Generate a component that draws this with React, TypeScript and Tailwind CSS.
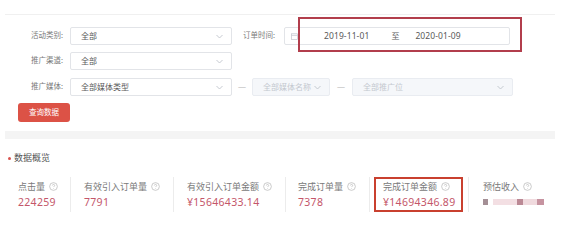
import React from "react";

const Chevron = ({ color = "#c0c4cc" }: { color?: string }) => (
  <svg width="7" height="5" viewBox="0 0 7 5" fill="none">
    <path d="M0.5 1L3.5 4L6.5 1" stroke={color} strokeWidth="0.9" />
  </svg>
);

const Help = () => (
  <svg width="9" height="9" viewBox="0 0 10 10" fill="none" className="ml-[4px] shrink-0">
    <circle cx="5" cy="5" r="4.3" stroke="#b8b8b8" strokeWidth="0.8" />
    <path d="M3.7 3.9C3.7 3.1 4.3 2.7 5 2.7C5.7 2.7 6.3 3.1 6.3 3.8C6.3 4.6 5.2 4.7 5.2 5.6" stroke="#b8b8b8" strokeWidth="0.8" />
    <circle cx="5.1" cy="7.1" r="0.45" fill="#b8b8b8" />
  </svg>
);

const Select = ({ w, text, disabled }: { w: string; text: string; disabled?: boolean }) => (
  <div
    className={`${w} h-[18px] flex items-center justify-between pl-[10px] pr-[8px] rounded-[2px] border text-[8px] whitespace-nowrap ${
      disabled ? "bg-[#f5f7fa] border-[#e9ecf1] text-[#c4c8cf]" : "bg-white border-[#e2e4e8] text-[#5a5a5a]"
    }`}
  >
    <span>{text}</span>
    <Chevron />
  </div>
);

const Label = ({ children }: { children: React.ReactNode }) => (
  <div className="w-[46px] text-right text-[7.5px] text-[#7a7a7a] pr-[1px] whitespace-nowrap">{children}</div>
);

const Stat = ({
  w,
  pl,
  label,
  value,
  first,
  boxed,
  blurred,
}: {
  w: string;
  pl: string;
  label: string;
  value?: string;
  first?: boolean;
  boxed?: boolean;
  blurred?: boolean;
}) => (
  <div className={`${w} ${pl} h-[35px] ${first ? "" : "border-l border-[#ececec]"}`}>
    <div
      className={`h-[35px] border-2 ${boxed ? "border-[#c9402f] w-[89px] px-[7px]" : "border-transparent"} flex flex-col`}
    >
      <div className="flex items-center h-[13px] mt-[1px] text-[9px] text-[#7a7a7a] leading-[13px] whitespace-nowrap">
        <span>{label}</span>
        <Help />
      </div>
      {blurred ? (
        <div className="flex items-center h-[16px] mt-[1px]">
          <div className="w-[5px] h-[6px] bg-[#a48f95]" />
          <div className="w-[24px] h-[6px] ml-[5px] bg-[#f3dfe3]" />
          <div className="w-[6px] h-[6px] bg-[#bb8995]" />
          <div className="w-[14px] h-[6px] bg-[#f0dade]" />
          <div className="w-[7px] h-[6px] bg-[#c693a0]" />
        </div>
      ) : (
        <div className="h-[16px] mt-[1px] text-[10.5px] leading-[16px] text-[#c4566a] tracking-[0.3px] whitespace-nowrap">
          {value}
        </div>
      )}
    </div>
  </div>
);

export default function App() {
  return (
    <div className="w-[565px] h-[251px] bg-white overflow-hidden relative font-['Noto_Sans','Noto_Sans_CJK_SC',sans-serif]">
      <div className="pt-[14px] pl-[5px]">
        <div className="w-[550px] border-t border-[#f0f0f0]" />
      </div>

      <div className="pl-[18px] pt-[12px]">
        {/* row 1 */}
        <div className="flex items-center h-[18px]">
          <Label>活动类别:</Label>
          <div className="ml-[6px]">
            <Select w="w-[162px]" text="全部" />
          </div>
          <div className="ml-[11px] w-[30px] text-[7.5px] text-[#7a7a7a] whitespace-nowrap">订单时间:</div>
          <div className="ml-[11px] w-[226px] h-[18px] border border-[#e2e4e8] rounded-[2px] flex items-center relative">
            <svg width="7" height="7" viewBox="0 0 7 7" className="ml-[6px]" fill="none">
              <rect x="0.5" y="0.8" width="6" height="5.7" stroke="#c0c4cc" strokeWidth="0.7" />
              <path d="M0.5 2.4H6.5" stroke="#c0c4cc" strokeWidth="0.7" />
            </svg>
            <span className="ml-[26px] text-[8.5px] text-[#5a5a5a] tracking-[0.1px]">2019-11-01</span>
            <span className="ml-[22px] text-[8px] text-[#5a5a5a]">至</span>
            <span className="ml-[16px] text-[8.5px] text-[#5a5a5a] tracking-[0.1px]">2020-01-09</span>
            <div className="absolute left-[13px] top-[-11px] w-[224px] h-[35px] border-2 border-[#b23e4c]" />
          </div>
        </div>

        {/* row 2 */}
        <div className="flex items-center h-[18px] mt-[7px]">
          <Label>推广渠道:</Label>
          <div className="ml-[6px]">
            <Select w="w-[162px]" text="全部" />
          </div>
        </div>

        {/* row 3 */}
        <div className="flex items-center h-[18px] mt-[8px]">
          <Label>推广媒体:</Label>
          <div className="ml-[6px]">
            <Select w="w-[162px]" text="全部媒体类型" />
          </div>
          <div className="w-[20px] text-center text-[8px] text-[#c8c8c8]">—</div>
          <Select w="w-[78px]" text="全部媒体名称" disabled />
          <div className="w-[22px] text-center text-[8px] text-[#c8c8c8]">—</div>
          <Select w="w-[161px]" text="全部推广位" disabled />
        </div>

        {/* button */}
        <div className="mt-[7px] w-[52px] h-[19px] rounded-[3px] bg-[#dc5246] flex items-center justify-center text-[7.5px] text-white">
          查询数据
        </div>
      </div>

      <div className="mt-[9px] ml-[5px] w-[550px] h-[8px] bg-[#f4f4f4]" />

      <div className="mt-[14px] ml-[8px] flex items-center h-[10px]">
        <div className="w-[3px] h-[3px] rounded-full bg-[#d9534f]" />
        <span className="ml-[3px] text-[9px] text-[#555] leading-[10px]">数据概览</span>
      </div>

      <div className="mt-[14px] ml-[16px] flex">
        <Stat w="w-[54px]" pl="pl-0" label="点击量" value="224259" first />
        <Stat w="w-[103px]" pl="pl-[11px]" label="有效引入订单量" value="7791" />
        <Stat w="w-[112px]" pl="pl-[11px]" label="有效引入订单金额" value="¥15646433.14" />
        <Stat w="w-[84px]" pl="pl-[10px]" label="完成订单量" value="7378" />
        <Stat w="w-[99px]" pl="pl-[4px]" label="完成订单金额" value="¥14694346.89" boxed />
        <Stat w="w-[90px]" pl="pl-[12px]" label="预估收入" blurred />
      </div>
    </div>
  );
}
